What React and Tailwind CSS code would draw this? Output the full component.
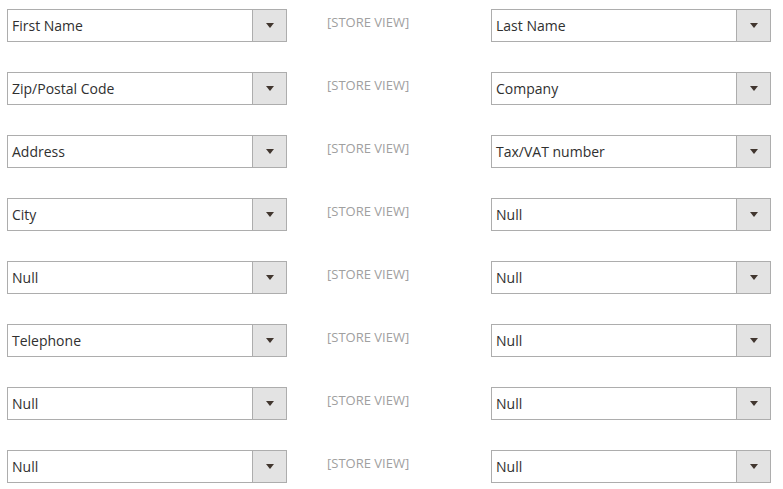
const ROWS = [
  ["First Name", "Last Name"],
  ["Zip/Postal Code", "Company"],
  ["Address", "Tax/VAT number"],
  ["City", "Null"],
  ["Null", "Null"],
  ["Telephone", "Null"],
  ["Null", "Null"],
  ["Null", "Null"],
];

function FakeSelect({ value }) {
  return (
    <div className="flex h-[33px] w-[280px] border border-[#adadad] bg-white">
      <div className="flex flex-1 items-center pl-1 text-[14px] text-[#303030]">{value}</div>
      <div className="flex w-[34px] items-center justify-center border-l border-[#adadad] bg-[#e3e3e3]">
        <svg width="8" height="5" viewBox="0 0 8 5">
          <path d="M0 0h8L4 5z" fill="#41362f" />
        </svg>
      </div>
    </div>
  );
}

export default function App() {
  return (
    <div
      className="flex min-h-[489px] flex-col gap-[30px] bg-white pl-[7px] pt-[9px]"
      style={{ fontFamily: '"Open Sans", sans-serif' }}
    >
      {ROWS.map(([left, right], i) => (
        <div key={i} className="flex items-start">
          <FakeSelect value={left} />
          <div className="w-[204px] pl-[40px] pt-[5px] text-[13px] leading-4 text-[#a0a0a0]">[STORE VIEW]</div>
          <FakeSelect value={right} />
        </div>
      ))}
    </div>
  );
}
